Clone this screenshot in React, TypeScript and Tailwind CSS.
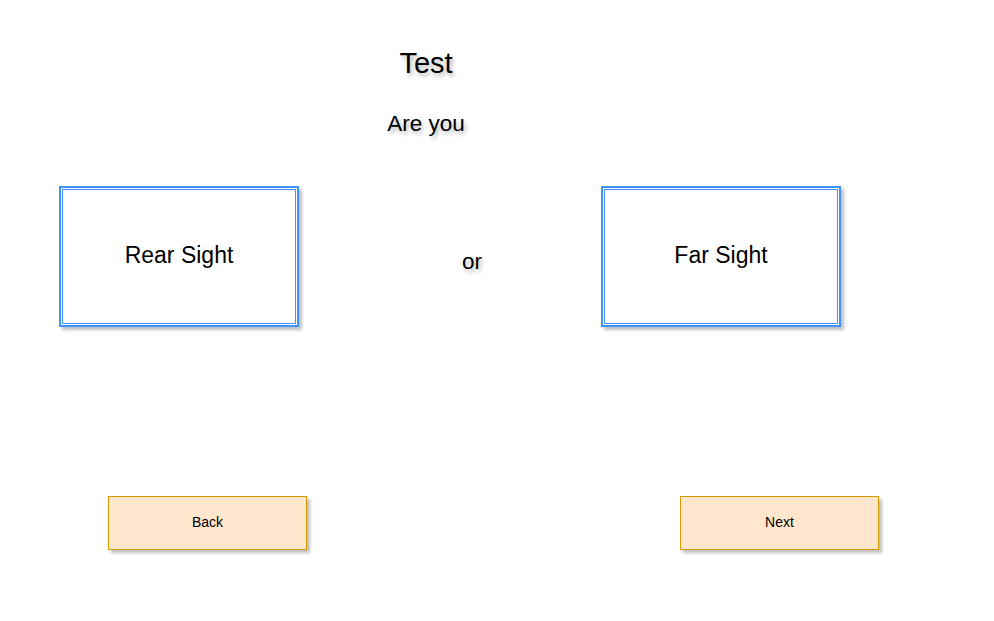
import React from "react";

function Choice({ label }: { label: string }) {
  return (
    <div className="w-[240px] h-[141px] border-2 border-[#3f94ff] p-px bg-white shadow-[3px_3px_3px_rgba(0,0,0,0.25)] shrink-0">
      <div className="w-full h-full border border-[#3f94ff] flex items-center justify-center text-[23px] leading-[26px] pb-[3px] text-black">
        {label}
      </div>
    </div>
  );
}

function Btn({ label }: { label: string }) {
  return (
    <div className="w-[199px] h-[54px] border border-[#d79b00] bg-[#ffe6cc] shadow-[3px_3px_3px_rgba(0,0,0,0.25)] flex items-center justify-center text-[14px] pb-[2px] text-black shrink-0">
      {label}
    </div>
  );
}

export default function App() {
  return (
    <div
      className="w-[994px] h-[621px] bg-white overflow-hidden flex flex-col"
      style={{ fontFamily: '"Liberation Sans", Arial, sans-serif' }}
    >
      <div className="w-[852px] text-center text-[29px] leading-[32px] mt-[47px] text-black [text-shadow:2px_3px_4px_rgba(0,0,0,0.3)]">
        Test
      </div>
      <div className="w-[852px] text-center text-[22.5px] leading-[26px] mt-[32px] text-black [text-shadow:2px_3px_4px_rgba(0,0,0,0.3)]">
        Are you
      </div>
      <div className="flex flex-row mt-[49px] pl-[59px]">
        <Choice label="Rear Sight" />
        <div className="w-[302px] shrink-0 flex">
          <div className="ml-[163px] mt-[63px] text-[22.5px] leading-[26px] text-black [text-shadow:2px_3px_4px_rgba(0,0,0,0.3)]">
            or
          </div>
        </div>
        <Choice label="Far Sight" />
      </div>
      <div className="flex flex-row mt-[169px] pl-[108px] gap-[373px]">
        <Btn label="Back" />
        <Btn label="Next" />
      </div>
    </div>
  );
}
